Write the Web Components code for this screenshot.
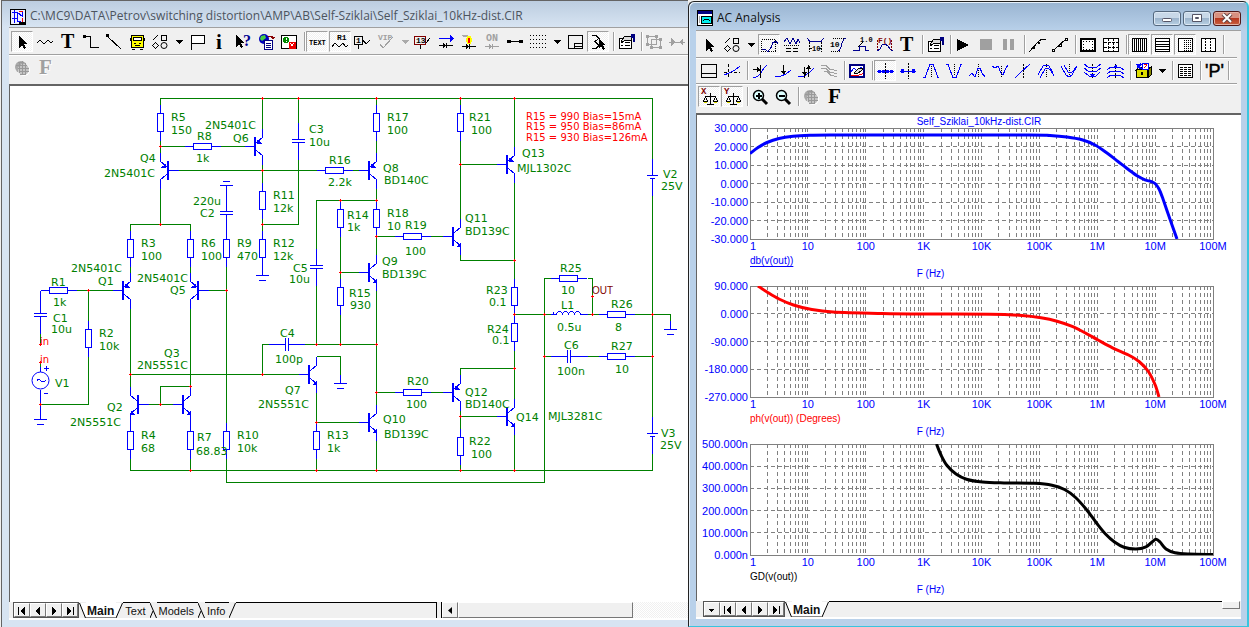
<!DOCTYPE html>
<html lang="en">
<head>
<meta charset="utf-8">
<title>AC Analysis</title>
<style>
  html, body {
    height: 100%;
  }

  body {
    margin: 0;
    display: grid;
    grid-template-columns: minmax(0, 688fr) minmax(0, 561fr);
    overflow: hidden;
    background: #f0f0f0;
    font-family: "Liberation Sans", Arial, sans-serif;
    font-size: 11px;
  }
</style>
</head>
<body>
  <mdi-window inactive icon="appSchematic" heading="C:\MC9\DATA\Petrov\switching distortion\AMP\AB\Self-Sziklai\Self_Sziklai_10kHz-dist.CIR">
    <tool-row slot="tools">
      <tool-button icon="cursor" label="Select" pressed></tool-button>
      <tool-button icon="resistor" label="Component"></tool-button>
      <tool-button icon="text" label="Text"></tool-button>
      <tool-button icon="wire" label="Wire"></tool-button>
      <tool-button icon="diagonal" label="Diagonal wire"></tool-button>
      <tool-button icon="bus" label="Bus"></tool-button>
      <tool-button icon="shapes" label="Graphics"></tool-button>
      <tool-button icon="drop" label="More graphics" narrow></tool-button>
      <tool-button icon="flag" label="Flag"></tool-button>
      <tool-button icon="info" label="Info"></tool-button>
      <tool-button icon="help" label="Help"></tool-button>
      <tool-button icon="link" label="File link"></tool-button>
      <tool-button icon="enable" label="Region enable"></tool-button>
      <tool-separator></tool-separator>
      <tool-button icon="gridText" label="Grid text" pressed></tool-button>
      <tool-button icon="attribute" label="Attribute text" pressed></tool-button>
      <tool-button icon="nodeNumber" label="Node numbers"></tool-button>
      <tool-button icon="vip" label="Values"></tool-button>
      <tool-button icon="dropOff" label="More values" narrow></tool-button>
      <tool-button icon="nodeVoltage" label="Node voltages"></tool-button>
      <tool-button icon="current" label="Currents"></tool-button>
      <tool-button icon="power" label="Powers"></tool-button>
      <tool-button icon="condition" label="Conditions"></tool-button>
      <tool-button icon="pins" label="Pin connections"></tool-button>
      <tool-button icon="dots" label="Grid"></tool-button>
      <tool-button icon="drop" label="Grid type" narrow></tool-button>
      <tool-button icon="titleBlock" label="Title block"></tool-button>
      <tool-button icon="rubber" label="Rubberbanding" pressed></tool-button>
      <tool-separator></tool-separator>
      <tool-button icon="properties" label="Properties"></tool-button>
      <tool-separator></tool-separator>
      <tool-button icon="group" label="Box"></tool-button>
      <tool-button icon="mirror" label="Mirror"></tool-button>
    </tool-row>
    <tool-row slot="tools">
      <tool-button icon="globeOff" label="Color"></tool-button>
      <tool-button icon="fontOff" label="Font"></tool-button>
    </tool-row>
    <schematic-sheet></schematic-sheet>
    <sheet-tabs slot="tabs" pages="Main,Text,Models,Info" scroll></sheet-tabs>
  </mdi-window>

  <mdi-window icon="appPlot" heading="AC Analysis">
    <tool-row slot="tools">
      <tool-button icon="cursor" label="Select"></tool-button>
      <tool-button icon="shapes" label="Graphics"></tool-button>
      <tool-button icon="drop" label="More graphics" narrow></tool-button>
      <tool-button icon="scale" label="Scale mode" pressed></tool-button>
      <tool-button icon="cursorMode" label="Cursor mode"></tool-button>
      <tool-button icon="tagH" label="Horizontal tag"></tool-button>
      <tool-button icon="tagV" label="Vertical tag"></tool-button>
      <tool-button icon="tagPoint" label="Point tag"></tool-button>
      <tool-button icon="performance" label="Performance tag"></tool-button>
      <tool-button icon="text" label="Text"></tool-button>
      <tool-separator></tool-separator>
      <tool-button icon="properties" label="Properties"></tool-button>
      <tool-separator></tool-separator>
      <tool-button icon="run" label="Run"></tool-button>
      <tool-button icon="stop" label="Stop"></tool-button>
      <tool-button icon="pause" label="Pause"></tool-button>
      <tool-separator></tool-separator>
      <tool-button icon="points" label="Data points"></tool-button>
      <tool-button icon="tokens" label="Tokens"></tool-button>
      <tool-separator></tool-separator>
      <tool-button icon="ruler" label="Ruler"></tool-button>
      <tool-button icon="plus" label="Plus mark"></tool-button>
      <tool-separator></tool-separator>
      <tool-button icon="gridX" label="X axis grids" pressed></tool-button>
      <tool-button icon="gridY" label="Y axis grids" pressed></tool-button>
      <tool-button icon="minorX" label="Minor log grids" pressed></tool-button>
      <tool-button icon="minorY" label="Minor grids"></tool-button>
      <tool-separator></tool-separator>
    </tool-row>
    <tool-row slot="tools">
      <tool-button icon="panel" label="Panel"></tool-button>
      <tool-button icon="baseline" label="Baseline"></tool-button>
      <tool-separator></tool-separator>
      <tool-button icon="trackLeft" label="Horizontal cursor"></tool-button>
      <tool-button icon="trackDown" label="Vertical cursor"></tool-button>
      <tool-button icon="trackBoth" label="Track both"></tool-button>
      <tool-button icon="branches" label="Branches"></tool-button>
      <tool-separator></tool-separator>
      <tool-button icon="thumbnail" label="Thumbnail plot"></tool-button>
      <tool-separator></tool-separator>
      <tool-button icon="nextPoint" label="Next data point" pressed></tool-button>
      <tool-button icon="nextInterp" label="Next interpolated"></tool-button>
      <tool-button icon="peak" label="Peak"></tool-button>
      <tool-button icon="valley" label="Valley"></tool-button>
      <tool-button icon="high" label="High"></tool-button>
      <tool-button icon="low" label="Low"></tool-button>
      <tool-button icon="inflection" label="Inflection"></tool-button>
      <tool-button icon="globalHigh" label="Global high"></tool-button>
      <tool-button icon="globalLow" label="Global low"></tool-button>
      <tool-button icon="bottom" label="Bottom"></tool-button>
      <tool-button icon="top" label="Top"></tool-button>
      <tool-separator></tool-separator>
      <tool-button icon="box" label="Performance functions"></tool-button>
      <tool-button icon="drop" label="More functions" narrow></tool-button>
      <tool-separator></tool-separator>
      <tool-button icon="numeric" label="Numeric output"></tool-button>
      <tool-separator></tool-separator>
      <tool-button icon="perf" label="Performance windows"></tool-button>
      <tool-separator></tool-separator>
    </tool-row>
    <tool-row slot="tools">
      <tool-button icon="scaleX" label="Auto scale X" pressed></tool-button>
      <tool-button icon="scaleY" label="Auto scale Y" pressed></tool-button>
      <tool-separator></tool-separator>
      <tool-button icon="zoomIn" label="Zoom in"></tool-button>
      <tool-button icon="zoomOut" label="Zoom out"></tool-button>
      <tool-separator></tool-separator>
      <tool-button icon="globeOff" label="Color"></tool-button>
      <tool-button icon="font" label="Font"></tool-button>
    </tool-row>
    <plot-page heading="Self_Sziklai_10kHz-dist.CIR">
      <bode-plot curve="gain"></bode-plot>
      <bode-plot curve="phase"></bode-plot>
      <bode-plot curve="delay"></bode-plot>
    </plot-page>
    <sheet-tabs slot="tabs" pages="Main" menu></sheet-tabs>
  </mdi-window>

<script>
// ---- icons, each drawn in a 22x22 box ----

const cursorShape = '<path d="M8 5v12l3-3 2 4 2-1-2-4h4z" fill="#000" stroke="none"/>';
const scales = `
  <g stroke="#000"><path d="M12.500 7v11M7 10.500h11M9 18.500h7M5 15.500h5M15 15.500h5"/><path d="M7.500 11l-2 4M7.500 11l2 4M17.500 11l-2 4M17.500 11l2 4"/></g>
  <path d="M6 16.500h3M16 16.500h3" stroke="#dd0"/>`;
const lens = (inner) => `
  <g shape-rendering="auto"><circle cx="9.500" cy="9.500" r="5" fill="#dff" stroke="#000" stroke-width="1.500"/>
  <path d="M13 13l5 5" stroke="#000" stroke-width="3"/></g><path d="${inner}" stroke="#000" stroke-width="2"/>`;
const globe = `
  <g shape-rendering="auto"><circle cx="10" cy="10" r="6" fill="#a8a8a8"/><circle cx="13" cy="13" r="6" fill="#fff"/>
  <circle cx="12.500" cy="12.500" r="5.500" fill="#c4c4c4"/></g>
  <path d="M7 5.500h6M5 8.500h11M7 11.500h11M8 14.500h10M9 17.500h6M8.500 5v11M11.500 4v14M14.500 6v12" stroke="#999"/>`;
const glyph = (char, x, y, size, color = '#000') =>
  `<text x="${x}" y="${y}" font-family="Liberation Serif, serif" font-weight="bold" font-size="${size}" fill="${color}" stroke="none">${char}</text>`;
const tiny = (chars, x, y, size = 7, color = '#000') =>
  `<text x="${x}" y="${y}" font-family="Liberation Mono, monospace" font-weight="bold" font-size="${size}" fill="${color}" stroke="none">${chars}</text>`;
const dashed = 'stroke="#000" stroke-dasharray="1 1"';

const ICONS = {
  cursor: cursorShape,
  resistor: '<path d="M3 12l3-3 4 4 4-4 3 3 2-2" stroke="#000"/>',
  text: glyph('T', 4, 17, 20),
  wire: '<path d="M4 5.500h6.500v11H19" stroke="#000"/><path d="M3 4h3v3h-3z" fill="#000"/>',
  diagonal: '<path d="M4 5l14 13" stroke="#000"/><path d="M3 3h3v3h-3z" fill="#000"/>',
  bus: `<rect x="5.500" y="4.500" width="12" height="12" fill="#ff0" stroke="#000"/><path d="M7.500 6.500h8v3h-8z" fill="#fff" stroke="#000"/>
    <path d="M8 12.500h2M13 12.500h2M9 14.500h5M4.500 7v3M18.500 7v3M6 18h3M14 18h3" stroke="#000"/>`,
  shapes: '<path d="M4 9l5-5M12.500 4.500h5v5h-5zM3.500 14.500l3-3 3 3-3 3z" stroke="#000"/><circle cx="15" cy="14.500" r="3" stroke="#000" shape-rendering="auto"/>',
  drop: '<path d="M7 9h8l-4 4z" fill="#000"/>',
  dropOff: '<path d="M7 9h8l-4 4z" fill="#aaa"/>',
  flag: '<path d="M5.500 19v-14.500h13v8h-13" stroke="#000" fill="#fff"/>',
  info: glyph('i', 7, 18, 21),
  help: '<path d="M4 4v12l3-3 2 4 2-1-2-4h3z" fill="#000"/>' + glyph('?', 11, 15, 16, '#000090'),
  link: `<g shape-rendering="auto"><circle cx="9" cy="8" r="5" fill="#00b"/><path d="M6 5l4-1 1 3-4 3-2-2zM10 10l3 1-2 2z" fill="#4c4"/></g>
    <path d="M9.500 9.500h8v9h-8z" fill="#fff" stroke="#000080"/><path d="M11 12.500h5M11 14.500h5M11 16.500h5" stroke="#000080"/>
    <path d="M13 5.500h4.500v2" stroke="#800"/><path d="M15 6h5l-2 3z" fill="#800"/>`,
  enable: `<rect x="3.500" y="4.500" width="15" height="13" fill="#fff" stroke="#000"/><circle cx="8" cy="9" r="3" fill="#080"/>
    <path d="M8 7v2M8 10v1" stroke="#fff"/><rect x="11" y="11" width="7" height="7" fill="#e00"/><path d="M12.500 12.500l3 3M15.500 12.500l-3 3" stroke="#fff"/>`,
  gridText: tiny('TEXT', 3, 14),
  attribute: tiny('R1', 8, 9, 8) + '<path d="M3 16l3-4 4 4 4-4 3 4 2-2" stroke="#000"/>',
  nodeNumber: '<path d="M2.500 5.500h8v8h-8zM6.500 14v4M11 9l3 4 4-4" stroke="#000"/>' + tiny('1', 4, 12, 8),
  vip: tiny('VIP', 3, 9, 8, '#a0a0a0') + '<path d="M5 13l3 4 10-11" stroke="#a0a0a0"/>',
  nodeVoltage: '<path d="M2.500 5.500h11v8h-11z" stroke="#800000"/><path d="M8.500 14v4M14 12l4-5" stroke="#000"/>' + tiny('13', 4, 12, 8),
  current: '<path d="M4 7.500h12" stroke="#00f"/><path d="M15 4l4 4-4 3z" fill="#00f"/><path d="M4 14.500h14M11.500 12v5" stroke="#000"/><path d="M8 12l3 3-3 2z" fill="#000"/>',
  power: `<path d="M4 4h6l2 4-3-2h-4z" fill="#aaa"/><ellipse cx="11" cy="9" rx="3" ry="4" fill="#ff0"/><path d="M10 7h2v5h-2z" fill="#f00"/>
    <path d="M4 15.500h14M11.500 13v5" stroke="#000"/><path d="M8 13l3 3-3 2z" fill="#000"/>`,
  condition: tiny('ON', 5, 10, 10, '#a0a0a0') + '<path d="M4 15.500h14M11.500 13v5" stroke="#a0a0a0"/><path d="M8 13l3 3-3 2z" fill="#a0a0a0"/>',
  pins: '<path d="M5 10h13v1h-13zM3 9h4v3h-4zM15 9h4v3h-4z" fill="#000"/>',
  dots: '<path d="M3 4.500h16M3 8.500h16M3 12.500h16M3 16.500h16" stroke="#000" stroke-dasharray="1 2"/>',
  titleBlock: '<path d="M4 4.500h14.500v13h-14.500zM10 18v-6h8M10 15h8" stroke="#000"/>',
  rubber: '<path d="M5 4.500h4l3 3-4 3 4 4-3 3h-4" stroke="#000"/><path d="M12 8v9l2-2 2 4 2-1-2-4h2z" fill="#000"/>',
  properties: `<path d="M4.500 7.500h12v10h-12z" fill="#fff" stroke="#000"/><path d="M6 11.500h2M10 11.500h5M6 14.500h2M10 14.500h5" stroke="#000"/>
    <path d="M6 10l4-5h6v4l-4 1-2-1-2 2z" fill="#ddd" stroke="#000"/><path d="M16 3h4v8h-2v-4h-2z" fill="#000080"/>`,
  group: '<path d="M4.500 5.500h9v8h-9zM8.500 8.500h9v8h-9z" stroke="#a0a0a0"/><path d="M3 4h3v3h-3zM12 4h3v3h-3zM3 12h3v3h-3zM16 15h3v3h-3zM16 7h3v3h-3zM7 15h3v3h-3z" fill="#a0a0a0"/>',
  mirror: '<path d="M3 11h16" stroke="#a0a0a0"/><path d="M5 7l4 4-4 4zM17 7l-4 4 4 4z" fill="#a0a0a0"/>',
  globeOff: globe,
  fontOff: glyph('F', 6, 18, 21, '#fff') + glyph('F', 5, 17, 21, '#a0a0a0'),
  font: glyph('F', 5, 17, 21),
  scale: `<path d="M3.500 5.500h14v12h-14z" ${dashed}/><path d="M4 15.500h3l3 2 3-4 2-5 3-1 2 2" stroke="#000090"/>`,
  cursorMode: `<path d="M3 8l3-4 3 6 3-6 3 6 2-5 2 4" stroke="#000090"/><path d="M3 11.500h16" ${dashed}/><path d="M5 14.500h5M5 17.500h5M12 14.500h5M12 17.500h5" stroke="#000"/>`,
  tagH: '<path d="M3 4l3 3.500h11l3-3.500" stroke="#000090"/><path d="M5.500 8v10M17.500 8v10M6 14.500h2M15 14.500h2" stroke="#000" stroke-dasharray="2 1"/>' + tiny('10', 8, 17, 7),
  tagV: `<path d="M6 4.500h12M4 17.500h10" ${dashed}/><path d="M11 17c5-1 2-12 8-13" stroke="#000090"/>` + tiny('10', 3, 13, 8),
  tagPoint: '<path d="M3 16.500h6v-4h6v4h4" stroke="#000090"/><path d="M8 13l5-5" stroke="#000"/>' + tiny('1.0', 10, 8, 7),
  performance: tiny('F()', 5, 9, 8, '#800000') + '<path d="M4 17l3-2 2-4 3-1 3 2 2 3 3 2" stroke="#000090"/><path d="M4.500 6v10M18.500 6v10" stroke="#800000" stroke-dasharray="2 1"/>',
  run: '<path d="M5 5v12l12-6z" fill="#000"/>',
  stop: '<path d="M5 5h12v11h-12z" fill="#a0a0a0"/>',
  pause: '<path d="M5 5h4v11h-4zM12 5h4v11h-4z" fill="#a0a0a0"/>',
  points: '<path d="M3 18l10-11 3-2h4" stroke="#000"/><path d="M7 13h2v2h-2zM12 8h2v2h-2z" fill="#000"/>',
  tokens: '<path d="M4 17l14-13" stroke="#000"/><path d="M3.500 15.500h2v2h-2zM10.500 10.500h2v2h-2zM16.500 4.500h2v2h-2z" fill="#fff" stroke="#000"/>',
  ruler: '<path d="M4 5h14v12h-14z" fill="#fff" stroke="#000" stroke-width="2"/><path d="M6 7h10M6 15h10M6.500 7v8M15.500 7v8" stroke="#000" stroke-dasharray="1 2"/>',
  plus: '<path d="M3.500 4.500h15v13h-15z" fill="#fff" stroke="#000"/><path d="M8.500 4v14M13.500 4v14M4 8.500h14M4 13.500h14" stroke="#000" stroke-dasharray="3 1"/>',
  gridX: '<path d="M4 4.500h14.500v13h-14.500z" fill="#fff" stroke="#000"/><path d="M6.500 4v14M8.500 4v14M10.500 4v14M12.500 4v14M14.500 4v14M16.500 4v14" stroke="#000"/>',
  gridY: '<path d="M4 4.500h14.500v13h-14.500z" fill="#fff" stroke="#000"/><path d="M4 7.500h14M4 10.500h14M4 12.500h14M4 15.500h14" stroke="#000"/>',
  minorX: '<path d="M4 4.500h14.500v13h-14.500z" fill="#fff" stroke="#000"/><path d="M10.500 4v14M12.500 4v14M14.500 4v14M16.500 4v14" stroke="#000" stroke-dasharray="1 1"/>',
  minorY: '<path d="M4 4.500h14.500v13h-14.500z" fill="#fff" stroke="#000"/><path d="M8.500 4v14M13.500 4v14" stroke="#000" stroke-dasharray="2 1"/>',
  panel: '<path d="M3 4.500h15.500v13h-15.500zM3 13.500h15" stroke="#000"/>',
  baseline: '<path d="M3 12.500h16M7.500 4v14" stroke="#000" stroke-dasharray="3 2"/><path d="M3 15l5-2 6-3 5-4" stroke="#00f"/>',
  trackLeft: '<path d="M4 18c8-1 8-8 14-13" stroke="#00f"/><path d="M4 9.500h7M11.500 5v13" stroke="#000"/><path d="M8 7v5l4-2z" fill="#000"/>',
  trackDown: '<path d="M3 16h6l5-2 5-4" stroke="#00f"/><path d="M11.500 5v9" stroke="#000"/><path d="M9 11h5l-2 4z" fill="#000"/>',
  trackBoth: '<path d="M3 16h6l5-3 5-5" stroke="#00f"/><path d="M9.500 7v11M13.500 5v12" stroke="#000"/><path d="M7 12h5l-2 4zM11 9h5l-2-4z" fill="#000"/>',
  branches: '<path d="M3 5.500h5l4 4 7 1M3 8.500h5l4 4 7 1M6 11.500h3l4 4 6 1" stroke="#a0a0a0"/>',
  thumbnail: '<path d="M4 5h14v12h-14z" fill="#fff" stroke="#000080" stroke-width="2"/><path d="M5 12l3-4 3 3 4-4 2 3" stroke="#00f"/><path d="M5 15.500h7l5-2" stroke="#f00"/><path d="M8 13l5-5h3v2l-5 4z" fill="#ddd" stroke="#000"/>',
  nextPoint: '<path d="M11.500 3v16" stroke="#000" stroke-dasharray="2 1"/><path d="M3 11.500h17" stroke="#00f"/><path d="M4 10h3v3h-3zM8 10h3v3h-3zM12 10h3v3h-3zM16 10h3v3h-3z" fill="#00f"/>',
  nextInterp: '<path d="M11.500 3v16" stroke="#000" stroke-dasharray="2 1"/><path d="M3 11.500h16" stroke="#00f"/><path d="M4 9h3v4h-3zM15 9h3v4h-3z" fill="#00f"/>',
  peak: `<path d="M11.500 4v14" ${dashed}/><path d="M3 17.500h2l3-8 2-5h3l2 5 3 8h1" stroke="#00f"/>`,
  valley: `<path d="M11.500 4v12" ${dashed}/><path d="M3 4.500h2l3 8 2 5h3l2-5 3-8h1" stroke="#00f"/>`,
  high: `<path d="M12.500 4v14" ${dashed}/><path d="M3 16l3-3 3 4 3-9h2l2 5 3 4" stroke="#00f"/>`,
  low: `<path d="M12.500 6v12" ${dashed}/><path d="M3 6l3 2 3-2 3 7 2 2 2-5 3-5" stroke="#00f"/>`,
  inflection: '<path d="M11.500 4v14" stroke="#000" stroke-dasharray="2 1"/><path d="M3 18l6-6 9-8" stroke="#00f"/>',
  globalHigh: `<path d="M11.500 4v14" ${dashed}/><path d="M3 15l5-9 3-1 3 1 4 7M5 18l5-9 3-1 3 3 3 5" stroke="#00f"/>`,
  globalLow: `<path d="M11.500 4v14" ${dashed}/><path d="M3 6l5 9 3 2 3-2 5-9M6 5l4 7 3 1 3-3 3-4" stroke="#00f"/>`,
  bottom: '<path d="M11.500 4v14" stroke="#000" stroke-dasharray="2 1"/><path d="M3 4l4 3h9l4-3M3 8l4 3h9l4-3M3 12l5 4h7l4-4" stroke="#00f"/><path d="M9 14h5l-2 4z" fill="#00f"/>',
  top: '<path d="M11.500 4v14" stroke="#000" stroke-dasharray="2 1"/><path d="M3 10l4-3h9l4 3M3 14l4-3h9l4 3M3 18l4-3h9l4 3" stroke="#00f"/><path d="M9 8h5l-2-4z" fill="#00f"/>',
  box: `<path d="M4 10l3-3h12l-3 3z" fill="#ffa" stroke="#000"/><path d="M4.500 9.500h11v8h-11z" fill="#dd0" stroke="#000"/><path d="M16 10l3-3v8l-3 3z" fill="#880" stroke="#000"/>
    <path d="M5 4l4 5M9 4l-4 4" stroke="#00f" stroke-width="2"/><path d="M10 3h6v6h-6z" fill="#fff" stroke="#00f"/><path d="M12 4h2v2l-2 2" stroke="#e00"/><path d="M9 12h2v3h-2z" fill="#000"/>`,
  numeric: '<path d="M4 4.500h14.500v13h-14.500z" fill="#fff" stroke="#000"/><path d="M6 7.500h11M6 9.500h11M6 11.500h11M6 13.500h11M6 15.500h11" stroke="#000" stroke-dasharray="3 1"/>',
  perf: '<text x="3" y="17" font-family="Liberation Sans, sans-serif" font-size="18" fill="#000" stroke="#000" stroke-width="0.500">\'P\'</text>',
  scaleX: tiny('X', 3, 8, 9, '#800000') + scales,
  scaleY: tiny('Y', 3, 8, 9, '#800000') + scales,
  zoomIn: lens('M7 10h6M10 7v6'),
  zoomOut: lens('M7 10h6'),
  appSchematic: `<rect x="3.500" y="3.500" width="15" height="15" fill="#eef" stroke="#000"/><path d="M5 6.500h5v9h4M7.500 4v13M5 12.500h6M11 7l4 3v-4M15.500 5v6" stroke="#00f"/>
    <path d="M12 5.500h4M15.500 12v4" stroke="#e00"/><path d="M12 16.500h6" stroke="#000" stroke-width="2"/>`,
  appPlot: `<rect x="3.500" y="3.500" width="15" height="15" fill="#fff" stroke="#000"/><path d="M4 5.500h14" stroke="#000080" stroke-width="3"/>
    <rect x="7.500" y="9.500" width="10" height="7" fill="#0ee" stroke="#000"/><path d="M9 14l2-2h3l2 2" stroke="#000"/><path d="M5.500 9v7" stroke="#aaa"/>`,
};

const drawIcon = (name) => `<svg width="22" height="22" viewBox="0 0 22 22" fill="none" shape-rendering="crispEdges" aria-hidden="true">${ICONS[name]}</svg>`;

// ---- toolbar ----

class ToolButton extends HTMLElement {
  connectedCallback() {
    this.attachShadow({ mode: 'open' }).innerHTML = `
      <style>
        :host { display: block; flex: none; width: 23px; }
        :host([narrow]) { width: 14px; }
        button {
          display: flex;
          align-items: center;
          justify-content: center;
          box-sizing: border-box;
          width: 22px;
          height: 21px;
          padding: 0;
          border: 1px solid transparent;
          background: none;
        }
        :host([narrow]) button { width: 14px; }
        :host([pressed]) button {
          border-color: #a0a0a0 #fff #fff #a0a0a0;
          background: repeating-conic-gradient(#fff 0 25%, #f0f0f0 0 50%) 0 0 / 2px 2px;
        }
        svg { flex: none; overflow: visible; }
      </style>
      <button type="button" aria-label="${this.getAttribute('label')}" aria-pressed="${this.hasAttribute('pressed')}">${drawIcon(this.getAttribute('icon'))}</button>
    `;
  }
}

class ToolSeparator extends HTMLElement {
  connectedCallback() {
    this.attachShadow({ mode: 'open' }).innerHTML = `
      <style>
        :host { display: flex; flex: none; justify-content: flex-end; width: 5px; }
        i { width: 1px; margin: 1px 1px 1px 0; background: #a0a0a0; box-shadow: 1px 0 #fff; }
      </style>
      <i></i>
    `;
  }
}

class ToolRow extends HTMLElement {
  connectedCallback() {
    this.attachShadow({ mode: 'open' }).innerHTML = `
      <style>
        :host {
          display: flex;
          padding: 2px 0 2px 2px;
          height: 21px;
          border-bottom: 1px solid #a0a0a0;
          box-shadow: 0 1px #fff;
          overflow-x: clip;
        }
        :host(:last-of-type) { border-color: transparent; box-shadow: none; }
      </style>
      <slot></slot>
    `;
  }
}

// ---- window frame ----

class MdiWindow extends HTMLElement {
  connectedCallback() {
    const controls = this.hasAttribute('inactive') ? '' : `
      <div class="controls">
        <button type="button" aria-label="Minimize"><svg width="12" height="10"><rect x="1.500" y="5.500" width="9" height="3" rx="1" fill="#fff" stroke="#556"/></svg></button>
        <button type="button" aria-label="Maximize"><svg width="12" height="10"><path d="M1.500 1.500h9v7h-9zM4.500 4.500h3v1h-3z" fill="#fff" fill-rule="evenodd" stroke="#556"/></svg></button>
        <button type="button" class="close" aria-label="Close"><svg width="12" height="10"><path d="M2 1l8 8M10 1l-8 8" stroke="#644" stroke-width="4"/><path d="M2 1l8 8M10 1l-8 8" stroke="#fff" stroke-width="2"/></svg></button>
      </div>`;
    this.attachShadow({ mode: 'open' }).innerHTML = `
      <style>
        :host {
          display: flex;
          flex-direction: column;
          box-sizing: border-box;
          min-width: 0;
          min-height: 0;
          margin-top: 1px;
          padding: 0 6px 7px 7px;
          border: 1px solid #222;
          border-right: 2px solid #38c5de;
          border-bottom: 1px solid #38c5de;
          border-radius: 6px 6px 0 0;
          background: linear-gradient(#99b4d1, #b9d1ea 29px);
          box-shadow: inset 1px 1px #e6f0fa;
        }
        :host([inactive]) {
          margin: 0 0 0 1px;
          padding: 0 0 7px 7px;
          border: solid #646464;
          border-width: 1px 0 0 1px;
          border-radius: 0;
          background: linear-gradient(#bccde0, #d7e4f2 26px);
          box-shadow: none;
        }
        header { display: flex; align-items: center; height: 28px; min-width: 0; }
        :host([inactive]) header { height: 26px; padding-top: 1px; box-sizing: border-box; }
        header svg { flex: none; }
        h1 {
          flex: 1;
          margin: 3px 0 0 1px;
          overflow: hidden;
          white-space: nowrap;
          color: #111;
          font: 12px/16px "Open Sans", "Noto Sans", sans-serif;
        }
        :host([inactive]) h1 { color: #4c545e; }
        header > svg { margin: 4px 0 0 -2px; }
        .controls { display: flex; gap: 2px; margin: 4px 0 0; }
        .controls button {
          display: flex;
          align-items: center;
          justify-content: center;
          box-sizing: border-box;
          width: 28px;
          height: 15px;
          padding: 0;
          border: 1px solid #54687e;
          border-radius: 3px;
          background: linear-gradient(#c8d8e8 45%, #9cb4cc 50%, #b8d0e4);
          box-shadow: inset 0 0 0 1px #dce8f4;
        }
        .controls .close { border-color: #501818; background: linear-gradient(#d89080 45%, #b83820 50%, #c86040); box-shadow: inset 0 0 0 1px #e4b0a4; }
        main {
          flex: 1;
          display: flex;
          flex-direction: column;
          min-height: 0;
          padding-top: 1px;
          border-top: 1px solid #a0a0a0;
          background: #f0f0f0;
        }
        .tools { padding: 0 4px 3px 0; }
        :host([inactive]) .tools { padding-right: 0; }
        .page {
          flex: 1;
          display: flex;
          min-height: 0;
          border: solid #646464;
          border-width: 2px 0 0 1px;
          background: #fff;
          overflow: hidden;
        }
      </style>
      <header>${drawIcon(this.getAttribute('icon'))}<h1>${this.getAttribute('heading')}</h1>${controls}</header>
      <main>
        <div class="tools"><slot name="tools"></slot></div>
        <div class="page"><slot></slot></div>
        <slot name="tabs"></slot>
      </main>
    `;
  }
}

// ---- page tabs under a sheet ----

const NAV = {
  Menu: 'M3 6h5l-2.500 3z',
  First: 'M2 3h1v8h-1zM9 3v8l-5-4z',
  Previous: 'M8 3v8l-5-4z',
  Next: 'M4 3v8l5-4z',
  Last: 'M3 3v8l5-4zM9 3h1v8h-1z',
};

class SheetTabs extends HTMLElement {
  connectedCallback() {
    const nav = Object.keys(NAV).filter((key) => key !== 'Menu' || this.hasAttribute('menu'));
    const pages = this.getAttribute('pages').split(',');
    const slant = (d, fill) => `<svg width="7" height="15" viewBox="0 0 7 15">${fill ? `<path d="${fill}" fill="#fff"/>` : ''}<path d="${d}" fill="none" stroke="#000"/></svg>`;
    const tabs = pages.map((page, i) => {
      const last = i === pages.length - 1;
      const edge = i === 0 || last ? 'M0 15L6.500 0' : 'M0 0L6.500 15M0 15L3 8';
      return `<button type="button" role="tab" aria-selected="${i === 0}">${page}</button>${slant(edge, i === 0 ? 'M0 0h6.500L0 15z' : '')}`;
    }).join('');

    this.attachShadow({ mode: 'open' }).innerHTML = `
      <style>
        :host { display: flex; height: 16px; padding-left: 4px; border-bottom: 2px solid #fff; background: #f0f0f0; }
        button { box-sizing: border-box; flex: none; padding: 0; font: 11px/14px "Liberation Sans", sans-serif; }
        .nav { display: flex; flex: none; border: 1px solid #555; box-sizing: border-box; }
        .nav button, .left { width: 16px; border: 1px solid; border-color: #fff #777 #777 #fff; background: #f0f0f0; line-height: 0; }
        :host([menu]) .nav { margin-left: 3px; }
        .tabs { display: flex; flex: 1; min-width: 0; border-right: 1px solid #000; }
        :host([menu]) .tabs { border: 0; }
        .tabs > svg { flex: none; margin-top: 1px; }
        .tabs button { border: 0; border-top: 1px solid #000; background: none; padding: 0 4px 0 2px; color: #111; }
        .tabs [aria-selected="true"] { border-color: transparent; background: #fff; padding: 0 2px 0 1px; font-weight: bold; font-size: 12px; box-shadow: inset 0 -1px #888; }
        .rest { flex: 1; border-top: 1px solid #000; }
        .scroll { display: flex; flex: 246 1 0; margin-left: 4px; border-left: 1px solid #000; background: repeating-conic-gradient(#fff 0 25%, #f0f0f0 0 50%) 0 0 / 2px 2px; }
        .thumb { width: 173px; border: 1px solid; border-color: #fff #777 #777 #fff; background: #f0f0f0; }
        .grip { width: 16px; height: 6px; margin-right: 1px; border: 1px solid; border-color: #fff #777 #777 #fff; }
        :host([scroll]) .tabs { flex: 357 1 0; }
      </style>
      <div class="nav">${nav.map((key) => `<button type="button" aria-label="${key}"><svg width="12" height="13" shape-rendering="crispEdges"><path d="${NAV[key]}"/></svg></button>`).join('')}</div>
      <div class="tabs" role="tablist">${slant('M0.500 0L6.500 15', 'M0 0h7v15z')}${tabs}<div class="rest"></div></div>
      ${this.hasAttribute('scroll') ? '<div class="scroll"><button type="button" class="left" aria-label="Scroll left"><svg width="12" height="13"><path d="M8 3v7l-4-3.500z"/></svg></button><div class="thumb"></div></div>' : '<div class="grip"></div>'}
    `;
  }
}

// ---- schematic ----

const WIRES = `
  M160 104V98H652V158 M652 195V416 M652 453V470H130V458 M226 458V482H544V278H550 M587 278H592V314
  M160 140V152 M160 146H184 M220 146H244 M160 188V224 M130 230V224H190V230 M178 170H316 M352 170H358
  M262 98V128 M262 164V182 M262 218V230 M298 98V122 M298 159V224H262
  M376 98V104 M376 140V152 M376 188V200H316V248 M316 285V344 M340 236V278 M340 272H358 M340 314V344
  M376 236V254 M376 290V404 M376 236H394 M430 236H442 M376 392H394 M430 392H442 M376 440V470
  M304 344H376 M268 344H262V374 M130 374H298 M316 356H340V374 M316 392V422H358 M316 458V470
  M460 98V104 M460 140V218 M460 164H496 M514 98V146 M514 182V278 M460 254V260H514 M514 350V398
  M460 374V368H514 M460 410V428 M460 416H496 M460 464V470 M514 434V470
  M514 314H550 M587 314H598 M634 314H670V320 M544 356H550 M587 356H598 M634 356H652
  M130 266V272 M190 266V272 M226 266V422 M208 290H226 M130 308V386 M190 308V386
  M148 404H172 M160 404V386H190 M190 458V470 M76 290H112 M88 290V320 M88 356V404H40 M40 333V344 M40 362V366`;

const NODES = [
  [160, 146], [160, 224], [262, 98], [298, 98], [376, 98], [460, 98], [514, 98], [262, 170], [262, 224],
  [340, 200], [376, 200], [376, 236], [340, 272], [316, 344], [340, 344], [376, 344], [262, 374], [376, 392],
  [316, 422], [316, 470], [376, 470], [460, 164], [514, 260], [514, 314], [514, 368], [460, 416], [460, 470],
  [514, 470], [544, 314], [544, 356], [592, 296], [592, 314], [652, 314], [652, 356], [88, 290], [226, 290],
  [130, 374], [190, 386], [160, 404], [190, 470], [40, 344], [40, 362], [40, 404],
];

// centres of the bodies
const RESISTORS_V = [
  [160, 122], [376, 122], [460, 122], [262, 200], [262, 248], [340, 218], [376, 218], [340, 296], [514, 296],
  [514, 332], [130, 248], [190, 248], [226, 248], [88, 338], [130, 440], [190, 440], [226, 440], [316, 440], [460, 446],
];
const RESISTORS_H = [[202, 146], [334, 170], [412, 236], [412, 392], [568, 278], [616, 314], [616, 356], [58, 290]];

// terminal x, centre y, side of the terminals, type
const TRANSISTORS = [
  [160, 170, -1, 'pnp'], [262, 146, 1, 'pnp'], [376, 170, 1, 'pnp'], [514, 164, 1, 'pnp'], [460, 236, 1, 'npn'],
  [376, 272, 1, 'npn'], [130, 290, 1, 'pnp'], [190, 290, -1, 'pnp'], [316, 374, 1, 'npn'], [460, 392, 1, 'pnp'],
  [514, 416, 1, 'npn'], [376, 422, 1, 'npn'], [130, 404, -1, 'npn'], [190, 404, 1, 'npn'],
];

const GROUNDS = [[262, 266, 275], [340, 374, 383], [670, 320, 329], [40, 404, 419]];

const LABELS = [
  ['R5', 171, 121], ['150', 171, 134], ['R8', 197, 140], ['1k', 196, 162], ['2N5401C', 205, 129], ['Q6', 233, 142],
  ['Q4', 140, 162], ['2N5401C', 104, 177], ['220u', 193, 205], ['C2', 200, 217], ['R3', 141, 247], ['100', 141, 260],
  ['R6', 201, 247], ['100', 201, 260], ['R9', 237, 247], ['470', 237, 260], ['2N5401C', 71, 272], ['Q1', 98, 285],
  ['2N5401C', 137, 282], ['Q5', 170, 294], ['R1', 51, 286], ['1k', 53, 306], ['C1', 53, 322], ['10u', 51, 333],
  ['R2', 99, 337], ['10k', 99, 350], ['V1', 55, 387], ['Q3', 164, 357], ['2N5551C', 137, 369], ['Q2', 107, 411],
  ['2N5551C', 70, 426], ['R4', 141, 439], ['68', 141, 452], ['R7', 197, 441], ['68.83', 196, 455], ['R10', 237, 439],
  ['10k', 237, 452], ['C3', 309, 133], ['10u', 309, 146], ['R16', 329, 164], ['2.2k', 328, 186], ['R17', 387, 121],
  ['100', 387, 134], ['Q8', 383, 172], ['BD140C', 384, 184], ['R11', 273, 199], ['12k', 273, 212], ['R12', 273, 247],
  ['12k', 273, 260], ['R14', 347, 219], ['1k', 347, 231], ['R18', 387, 217], ['10', 387, 230], ['R19', 405, 229],
  ['100', 405, 255], ['Q9', 382, 265], ['BD139C', 382, 278], ['C5', 293, 272], ['10u', 289, 283], ['R15', 349, 297],
  ['930', 350, 309], ['C4', 280, 337], ['100p', 275, 363], ['Q7', 285, 394], ['2N5551C', 258, 408], ['R20', 407, 385],
  ['100', 406, 408], ['Q10', 383, 423], ['BD139C', 384, 438], ['R13', 327, 439], ['1k', 327, 452], ['R21', 469, 121],
  ['100', 471, 134], ['Q13', 522, 157], ['MJL1302C', 517, 172], ['Q11', 465, 222], ['BD139C', 465, 235],
  ['V2', 663, 178], ['25V', 661, 190], ['R25', 560, 272], ['10', 561, 294], ['L1', 561, 309], ['0.5u', 557, 331],
  ['R26', 611, 308], ['8', 615, 331], ['R23', 486, 294], ['0.1', 489, 306], ['R24', 487, 333], ['0.1', 492, 344],
  ['C6', 564, 349], ['100n', 557, 375], ['R27', 611, 350], ['10', 615, 373], ['Q12', 465, 396], ['BD140C', 465, 408],
  ['Q14', 516, 421], ['MJL3281C', 548, 420], ['R22', 469, 445], ['100', 471, 458], ['V3', 661, 437], ['25V', 660, 449],
];

const NOTES = [
  ['R15 = 990 Bias=15mA', 526, 120], ['R15 = 950 Bias=86mA', 526, 130], ['R15 = 930 Bias=126mA', 526, 141],
];

class SchematicSheet extends HTMLElement {
  connectedCallback() {
    const thin = [];
    const thick = [];
    const heads = [];

    RESISTORS_V.forEach(([x, y]) => thin.push(`M${x} ${y - 18}v9M${x} ${y + 9}v9M${x - 3} ${y - 9}h6v18h-6z`));
    RESISTORS_H.forEach(([x, y]) => thin.push(`M${x - 18} ${y}h9M${x + 9} ${y}h9M${x - 9} ${y - 3}h18v6h-18z`));
    GROUNDS.forEach(([x, y, bar]) => thin.push(`M${x} ${y}V${bar}M${x - 6.5} ${bar}h13M${x - 3.5} ${bar + 5}h7`));
    TRANSISTORS.forEach(([x, y, side, type]) => {
      const bar = x - 7.5 * side;
      thin.push(`M${x} ${y - 18}v9L${bar} ${y - 3}M${x} ${y + 18}v-9L${bar} ${y + 3}M${bar} ${y}H${x - 18 * side}`);
      thick.push(`M${bar} ${y - 9.5}v19`);
      heads.push(type === 'pnp'
        ? `M${bar + 2 * side} ${y - 2}v-5l${5 * side} 4z`
        : `M${x} ${y + 10}h${-4 * side}l${4 * side} -4z`);
    });
    // capacitors, batteries, inductor and source
    thin.push('M298 122V139M291.500 139h13M291.500 142h13M298 142V159');
    thin.push('M316 248V265M309.500 265h13M309.500 268h13M316 268V285');
    thin.push('M226 185V211M219.500 211h13M219.500 214h13M226 214V230M219.500 185h13M222.500 181h7');
    thin.push('M40 290V313M33.500 313h13M33.500 316h13M40 316V333');
    thin.push('M268 344H285M285 337.500v13M288 337.500v13M288 344H304');
    thin.push('M550 356H567M567 349.500v13M570 349.500v13M570 356H587');
    thin.push('M652 158V175M646.500 175h11M649.500 178h5M652 178V195M652 416V433M646.500 433h11M649.500 436h5M652 436V453');
    thin.push('M550 314h6q0 -3 3 -3t3 3q0 -3 3 -3t3 3q0 -3 3 -3t3 3q0 -3 3 -3t3 3h7M553 311v2');
    thin.push('M40 366V371M40 389V404M43.500 368h5M46 365.500v5M43.500 393h4M36 381q2 -4 4 -1t5 0');

    const write = ([text, x, y]) => `<text x="${x}" y="${y}">${text}</text>`;
    this.attachShadow({ mode: 'open' }).innerHTML = `
      <style>
        :host { display: block; flex: 1; min-width: 0; overflow: hidden; }
        svg { display: block; width: 100%; height: 100%; }
        .lines { fill: none; shape-rendering: crispEdges; }
        text { font: 11px "DejaVu Sans", Verdana, sans-serif; fill: #008000; }
        .notes text { font-size: 10px; fill: #f00; }
        .pins text { font: 10px "DejaVu Sans", sans-serif; fill: #f00; }
        .pins .out { font-family: "Liberation Sans", sans-serif; fill: #800000; }
      </style>
      <svg role="img" aria-label="Amplifier schematic">
        <g class="lines" transform="translate(-9.500 -85.500)">
          <path d="${WIRES}" stroke="#008000"/>
          <path d="${thin.join('')}" stroke="#00f"/>
          <circle cx="40" cy="380" r="8.500" stroke="#00f" shape-rendering="auto"/>
          <path d="${thick.join('')}" stroke="#00f" stroke-width="2"/>
          <path d="${heads.join('')}" fill="#00f"/>
          <path d="${NODES.map(([x, y]) => `M${x - 1.5} ${y}h3M${x} ${y - 1.5}v3`).join('')}" stroke="#f00"/>
        </g>
        <g transform="translate(-10 -86)">
          ${LABELS.map(write).join('')}
          <g class="notes">${NOTES.map(write).join('')}</g>
          <g class="pins"><text x="40" y="345">in</text><text x="40" y="363">in</text><text class="out" x="592" y="294">OUT</text></g>
        </g>
      </svg>
    `;
  }
}

// ---- plots ----

const CURVES = {
  gain: {
    name: 'db(v(out))',
    color: '#00f',
    ticks: ['30.000', '20.000', '10.000', '0.000', '-10.000', '-20.000', '-30.000'],
    points: [[0, 25.5], [8, 19.5], [17, 14.5], [29, 10.5], [43, 8.3], [60, 7.3], [80, 7], [180, 7], [280, 7], [300, 7.5], [317, 9], [332, 11.8],
      [345, 17], [357, 25], [368, 33.5], [379, 42], [387.5, 48], [395, 51.8], [401, 53.5], [405, 55.5], [409, 61], [413, 71], [418, 85.5], [427, 111]],
  },
  phase: {
    name: 'ph(v(out)) (Degrees)',
    color: '#f00',
    ticks: ['90.000', '0.000', '-90.000', '-180.000', '-270.000'],
    points: [[8, 0], [17, 6], [29, 13], [43.5, 19], [59.5, 23], [83, 26], [132, 27.5], [175, 28], [240, 28.2], [272, 29.5], [291, 31.8],
      [307, 35.2], [321.5, 40.2], [336, 47.3], [348, 54], [362.5, 61.8], [378.5, 69], [389, 75.5], [398, 85], [405, 98.500], [409, 111]],
  },
  delay: {
    name: 'GD(v(out))',
    color: '#000',
    ticks: ['500.000n', '400.000n', '300.000n', '200.000n', '100.000n', '0.000n'],
    points: [[186.5, 0], [191, 11], [197, 21.5], [206, 30], [216.5, 35.2], [232.5, 38], [254, 38.9], [285, 39.3], [302, 41.2], [314.5, 45.5],
      [325, 53], [336, 65], [346.5, 79], [355.5, 90], [364.5, 98], [374, 103.2], [386, 105], [396, 102.8], [402, 98], [406, 95.3], [410, 98],
      [416, 105], [425, 108.7], [439, 110], [463, 110.6]],
  },
};

const FREQUENCIES = ['1', '10', '100', '1K', '10K', '100K', '1M', '10M', '100M'];

// Catmull-Rom spline through the points, as cubic segments
const spline = (points) => points.slice(1).reduce((path, point, i) => {
  const from = points[i];
  const before = points[i - 1] || from;
  const after = points[i + 2] || point;
  const c1 = [from[0] + (point[0] - before[0]) / 6, from[1] + (point[1] - before[1]) / 6];
  const c2 = [point[0] - (after[0] - from[0]) / 6, point[1] - (after[1] - from[1]) / 6];
  return `${path}C${c1} ${c2} ${point}`;
}, `M${points[0]}`);

class BodePlot extends HTMLElement {
  connectedCallback() {
    const curve = CURVES[this.getAttribute('curve')];
    const decades = FREQUENCIES.length - 1;
    let grid = '';
    for (let d = 0; d < decades; d++) {
      for (let n = 2; n <= 10; n++) {
        const x = ((d + Math.log10(n)) / decades) * 100;
        grid += `<line x1="${x}%" x2="${x}%" y1="0" y2="100%"/>`;
      }
    }
    curve.ticks.forEach((tick, i) => {
      const y = (i / (curve.ticks.length - 1)) * 100;
      grid += `<line x1="0" x2="100%" y1="${y}%" y2="${y}%"/>`;
    });

    this.attachShadow({ mode: 'open' }).innerHTML = `
      <style>
        :host {
          display: grid;
          flex: 1 1 0;
          grid-template-columns: 53px minmax(0, 1fr);
          grid-template-rows: minmax(0, 1fr) 15px 13px 13px;
          min-height: 0;
          margin-right: 28px;
          color: #00f;
        }
        .y, .x { display: flex; justify-content: space-between; }
        .y { flex-direction: column; padding-right: 2px; }
        .y span { display: flex; align-items: center; justify-content: flex-end; height: 0; }
        .x { grid-column: 2; line-height: 15px; }
        .x span { display: flex; justify-content: center; width: 0; }
        .x span:first-child { justify-content: flex-start; }
        .plot { display: block; width: 100%; height: 100%; min-height: 0; overflow: visible; shape-rendering: crispEdges; }
        .grid { stroke: #808080; stroke-dasharray: 4 3; }
        .name, .unit { grid-column: 2; font-size: 10px; line-height: 13px; }
        .name { justify-self: start; padding: 0; border: 0; background: none; font-family: inherit; color: ${curve.color}; }
        :host([curve="gain"]) .name { text-decoration: underline; text-underline-offset: 2px; }
        .unit { padding-left: 36%; }
      </style>
      <div class="y">${curve.ticks.map((tick) => `<span>${tick}</span>`).join('')}</div>
      <svg class="plot">
        <g class="grid">${grid}</g>
        <rect width="100%" height="100%" fill="none" stroke="#808080"/>
        <svg width="100%" height="100%" viewBox="0 0 463 111" preserveAspectRatio="none">
          <path d="${spline(curve.points)}" fill="none" stroke="${curve.color}" stroke-width="3" vector-effect="non-scaling-stroke" shape-rendering="auto"/>
        </svg>
      </svg>
      <div class="x">${FREQUENCIES.map((f) => `<span>${f}</span>`).join('')}</div>
      <button type="button" class="name">${curve.name}</button>
      <div class="unit">F (Hz)</div>
    `;
  }
}

class PlotPage extends HTMLElement {
  connectedCallback() {
    this.attachShadow({ mode: 'open' }).innerHTML = `
      <style>
        :host { display: flex; flex: 1; flex-direction: column; min-width: 0; padding-bottom: 5px; }
        header { margin: 0 28px 0 53px; }
        h2 { margin: 0; padding-left: 36%; color: #00f; font-weight: normal; font-size: 10px; line-height: 13px; }
        .plots { display: flex; flex: 1; flex-direction: column; gap: 6px; min-height: 0; }
      </style>
      <header><h2>${this.getAttribute('heading')}</h2></header>
      <div class="plots"><slot></slot></div>
    `;
  }
}

customElements.define('tool-button', ToolButton);
customElements.define('tool-separator', ToolSeparator);
customElements.define('tool-row', ToolRow);
customElements.define('mdi-window', MdiWindow);
customElements.define('sheet-tabs', SheetTabs);
customElements.define('schematic-sheet', SchematicSheet);
customElements.define('bode-plot', BodePlot);
customElements.define('plot-page', PlotPage);
</script>
</body>
</html>
